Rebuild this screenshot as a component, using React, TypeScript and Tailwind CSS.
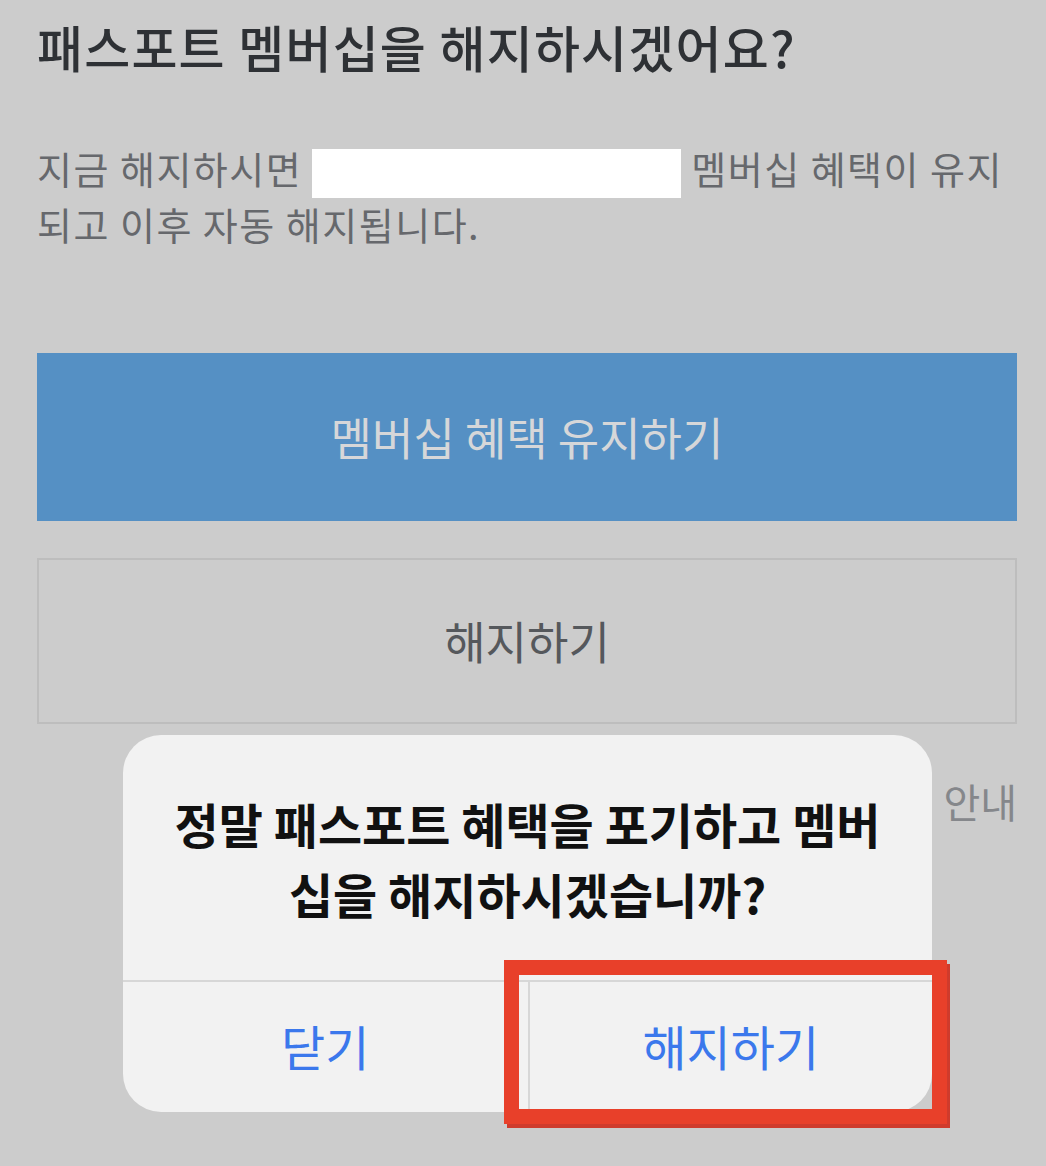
export default function App() {
  return (
    <div className="relative h-[1166px] w-[1046px] overflow-hidden bg-[#cccccc] font-['Noto_Sans_CJK_KR',sans-serif]">
      {/* page behind the alert */}
      <div className="pl-[37px] pr-[29px] pt-[14px]">
        <h1 className="whitespace-nowrap text-[50px] leading-[64px] tracking-[1.2px] font-medium text-[#2e3135]">
          패스포트 멤버십을 해지하시겠어요?
        </h1>

        <p className="mt-[64px] whitespace-nowrap text-[38px] leading-[52px] tracking-[1.5px] text-[#66686c]">
          지금 해지하시면{' '}
          <span className="inline-block h-[49px] w-[369px] bg-white align-middle" />{' '}
          멤버십 혜택이 유지
          <br />
          되고 이후 자동 해지됩니다.
        </p>

        <button className="mt-[103px] flex h-[168px] w-full items-center justify-center bg-[#5590c4] text-[45px] text-[#d6d7d9]">
          멤버십 혜택 유지하기
        </button>

        <button className="mt-[37px] flex h-[166px] w-full items-center justify-center border-2 border-[#bdbdbd] text-[45px] text-[#55585c]">
          해지하기
        </button>

        <div className="mt-[53px] text-right text-[40px] leading-[48px] text-[#85878b]">안내</div>
      </div>

      {/* iOS style alert */}
      <div className="absolute left-[123px] top-[735px] flex h-[377px] w-[809px] flex-col overflow-hidden rounded-[38px] bg-[#f2f2f2]">
        <div className="flex h-[245px] items-center justify-center px-6 text-center">
          <p className="whitespace-nowrap text-[48px] leading-[70px] font-bold text-[#111111]">
            정말 패스포트 혜택을 포기하고 멤버
            <br />
            십을 해지하시겠습니까?
          </p>
        </div>
        <div className="grid flex-1 grid-cols-2 border-t-2 border-[#d7d7d7]">
          <button className="flex items-center justify-center pb-1 text-[48px] text-[#3b78ec]">닫기</button>
          <button className="flex items-center justify-center border-l-2 border-[#d7d7d7] pb-1 text-[48px] text-[#3b78ec]">
            해지하기
          </button>
        </div>
      </div>

      {/* red highlight annotation */}
      <div className="absolute left-[504px] top-[960px] h-[164px] w-[443px] border-[15px] border-[#e8402a] shadow-[3px_4px_0_#cf3b2c]" />
    </div>
  )
}
